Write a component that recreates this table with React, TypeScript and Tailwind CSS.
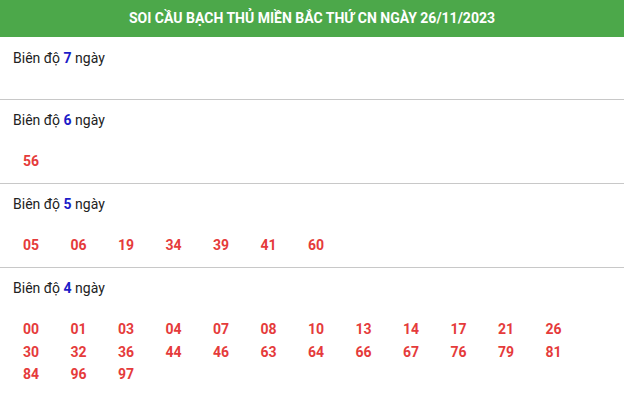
import React from "react";

const sections: { days: number; nums: string[] }[] = [
  { days: 7, nums: [] },
  { days: 6, nums: ["56"] },
  { days: 5, nums: ["05", "06", "19", "34", "39", "41", "60"] },
  {
    days: 4,
    nums: [
      "00", "01", "03", "04", "07", "08", "10", "13", "14", "17", "21", "26",
      "30", "32", "36", "44", "46", "63", "64", "66", "67", "76", "79", "81",
      "84", "96", "97",
    ],
  },
];

export default function App() {
  return (
    <div className="w-[624px] h-[393px] overflow-hidden bg-white" style={{ fontFamily: "Roboto, 'Noto Sans', sans-serif" }}>
      <div className="h-[37px] bg-[#4ca84a] flex items-center justify-center">
        <span className="text-white font-bold text-[14px]">
          SOI CẦU BẠCH THỦ MIỀN BẮC THỨ CN NGÀY 26/11/2023
        </span>
      </div>
      {sections.map((s, i) => (
        <div key={s.days} className={i > 0 ? "border-t border-[#c8c8c8]" : ""}>
          <div
            className={
              i > 0
                ? "pt-[9px] px-[13px] h-[31px] text-[14px] leading-[22px] text-[#222]"
                : "pt-[10px] px-[13px] h-[32px] text-[14px] leading-[22px] text-[#222]"
            }
          >
            Biên độ <span className="font-bold text-[#1c1cc8]">{s.days}</span> ngày
          </div>
          <div className="min-h-[30px] pt-[19px] pb-[10.5px] pl-[23px] grid grid-cols-[repeat(12,47.5px)] leading-[22.5px]">
            {s.nums.map((n) => (
              <span key={n} className="text-[14px] font-bold text-[#e53b3b]">
                {n}
              </span>
            ))}
          </div>
        </div>
      ))}
    </div>
  );
}
